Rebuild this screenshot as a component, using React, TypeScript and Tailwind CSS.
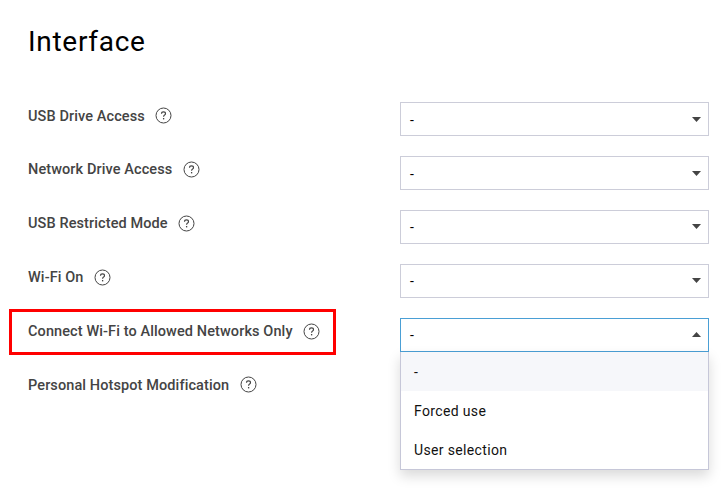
type Row = { label: string; open?: boolean; bare?: boolean };

const rows: Row[] = [
  { label: "USB Drive Access" },
  { label: "Network Drive Access" },
  { label: "USB Restricted Mode" },
  { label: "Wi-Fi On" },
  { label: "Connect Wi-Fi to Allowed Networks Only", open: true },
  { label: "Personal Hotspot Modification", bare: true },
];

function HelpIcon() {
  return (
    <svg className="-mt-px ml-[10.5px] size-[17px] shrink-0" viewBox="0 0 17 17" fill="none" stroke="#444">
      <circle cx="8.5" cy="8.5" r="7.5" strokeWidth="1" />
      <path d="M6.5 6.8c0-1.2.8-1.9 2-1.9s2 .7 2 1.8c0 1.3-1.9 1.4-1.9 2.8v.3" strokeWidth="1.15" />
      <path d="M8.6 11v1.4" strokeWidth="1.3" />
    </svg>
  );
}

function Select({ open }: { open?: boolean }) {
  return (
    <div className="relative">
      <div
        className={`flex h-[34px] w-[309px] items-center justify-between border bg-white pr-[7px] pl-[9px] text-[14px] text-black ${
          open ? "border-[#4a9fd5]" : "border-[#cccdd9]"
        }`}
      >
        <span className="pt-[2px]">-</span>
        <svg className="h-[5px] w-[9px]" viewBox="0 0 9 5" fill="#444">
          <path d={open ? "M0 5 4.5 0 9 5Z" : "M0 0 4.5 5 9 0Z"} />
        </svg>
      </div>
      {open && (
        <div className="absolute top-[34px] left-0 w-[309px] border border-t-0 border-[#c6c7d8] bg-white text-[14px] tracking-[0.35px] text-[#111] shadow-[0_6px_12px_rgba(0,0,0,0.15)]">
          <div className="flex h-[39px] items-center bg-[#f6f7fa] px-[13px] pt-[2px]">-</div>
          <div className="flex h-[39px] items-center px-[13px] pt-[2px]">Forced use</div>
          <div className="flex h-[39px] items-center px-[13px] pt-[2px]">User selection</div>
        </div>
      )}
    </div>
  );
}

export default function App() {
  return (
    <main className="h-[493px] w-[723px] overflow-hidden bg-white pt-[24px] pl-[28px] font-[Roboto,sans-serif]">
      <h1 className="h-[78.4px] text-[28px] leading-[36px] tracking-[0.7px] text-black">Interface</h1>
      {rows.map((row) => (
        <div key={row.label} className="flex h-[53.8px] items-start">
          <div className="w-[372px]">
            <div
              className={
                row.open
                  ? "-mt-[9px] -ml-[19px] flex h-[46px] w-[327px] items-center border-3 border-[#ff0000] pl-[16px]"
                  : "flex h-[28px] items-center"
              }
            >
              <span className="text-[14.5px] font-medium tracking-[0.1px] whitespace-nowrap text-[#444]">{row.label}</span>
              <HelpIcon />
            </div>
          </div>
          {!row.bare && <Select open={row.open} />}
        </div>
      ))}
    </main>
  );
}
